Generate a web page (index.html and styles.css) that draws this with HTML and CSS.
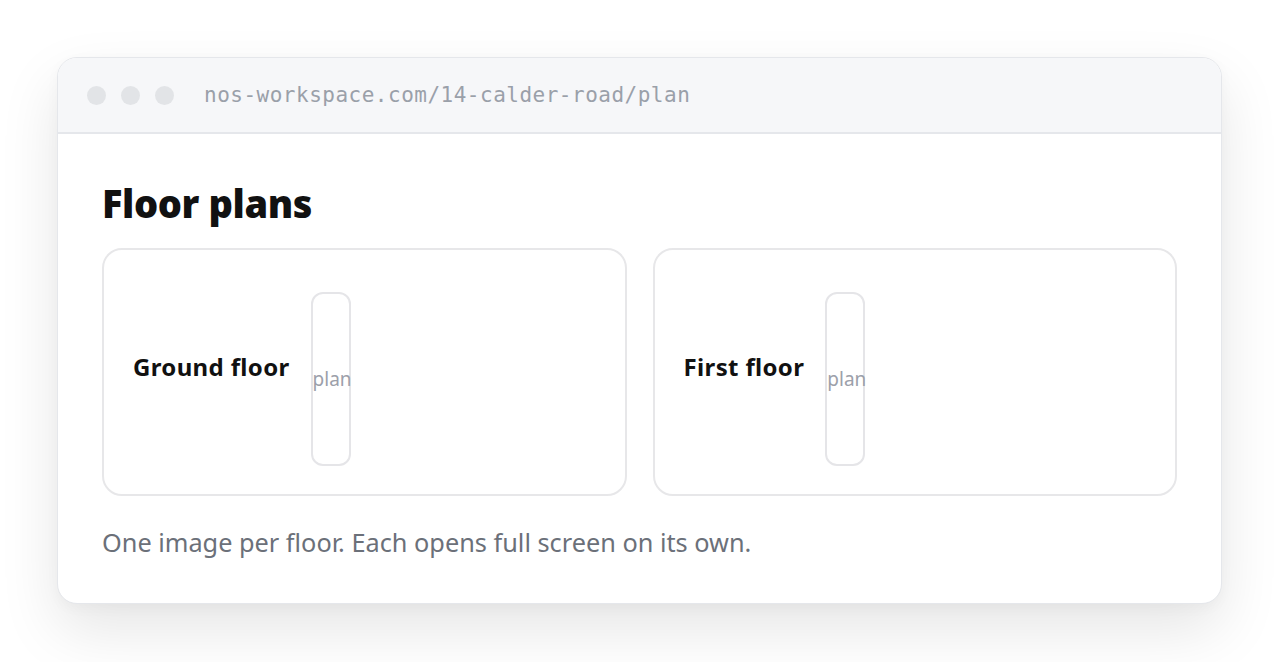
FILE: index.html
```html
<!DOCTYPE html>
<html lang="en">
<head>
	<meta charset="UTF-8">
	<meta name="viewport" content="width=device-width, initial-scale=1.0">
	<title>Floor plans</title>
	<link rel="stylesheet" href="styles.css">
</head>
<body>
	<div class="window">
		<div class="titlebar">
			<span class="dot"></span><span class="dot"></span><span class="dot"></span>
			<span class="url">nos-workspace.com/14-calder-road/plan</span>
		</div>
		<div class="content">
			<h1>Floor plans</h1>
			<div class="plans">
				<div class="plan">
					<span class="plan-label">Ground floor</span>
					<div class="plan-img">plan</div>
				</div>
				<div class="plan">
					<span class="plan-label">First floor</span>
					<div class="plan-img">plan</div>
				</div>
			</div>
			<p class="note">One image per floor. Each opens full screen on its own.</p>
		</div>
	</div>
</body>
</html>
```

FILE: styles.css
```css
html {background:#fff;}
body {margin:0; padding:57px 58px 80px 57px; font-family:"Noto Sans", "Open Sans", sans-serif;}
.window {border:1px solid #e5e7eb; border-radius:20px; background:#fff; overflow:hidden; box-shadow:0 26px 60px rgba(0,0,0,.1), 0 4px 14px rgba(0,0,0,.03);}
.titlebar {height:76px; box-sizing:border-box; display:flex; align-items:center; padding:0 0 0 29px; background:#f6f7f9; border-bottom:2px solid #e5e7eb;}
.dot {width:19px; height:19px; border-radius:50%; background:#e2e4e7; margin-right:15px;}
.url {margin-left:15px; font-family:"DejaVu Sans Mono", "Liberation Mono", monospace; font-size:21px; color:#9aa0a9; letter-spacing:0.5px;}
.content {padding:47px 44px 45px 44px;}
h1 {margin:0 0 23px; font-size:38px; font-weight:900; color:#111; line-height:44px; letter-spacing:-0.4px;}
.plans {display:flex; gap:26px;}
.plan {flex:1; display:flex; align-items:center; padding:26px 28px 28px 29px; border:2px solid #e7e7e9; border-radius:20px;}
.plan-label {font-size:24px; font-weight:700; color:#111; letter-spacing:0.35px; margin:0 21px 10px 0;}
.plan-img {width:40px; height:174px; box-sizing:border-box; margin-top:16px; border:2px solid #e5e5e8; border-radius:12px; display:flex; align-items:center; font-size:19px; color:#9ca0aa; white-space:nowrap;}
.note {margin:30px 0 0; font-size:25.3px; color:#6b7079; line-height:32px;}
```
